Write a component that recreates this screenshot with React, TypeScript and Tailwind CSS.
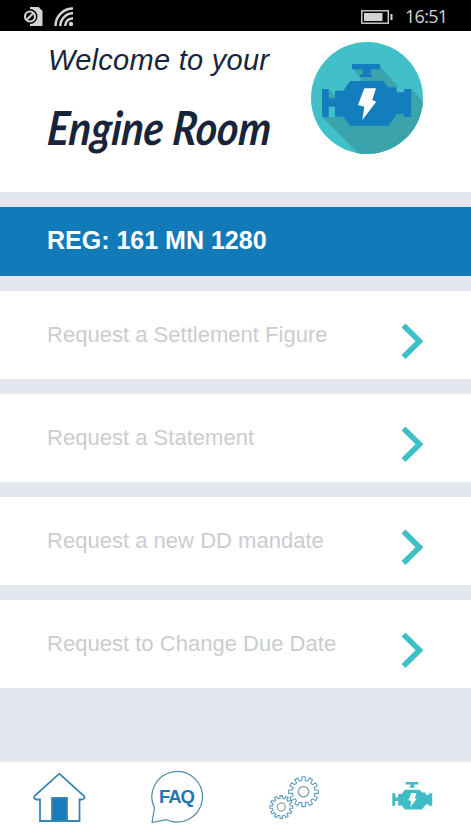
import React from 'react';

const requests = [
    'Request a Settlement Figure',
    'Request a Statement',
    'Request a new DD mandate',
    'Request to Change Due Date',
];

const ENGINE_BODY =
    'M39 39H72.3L77.3 45.3H85.7V50.3H93V47H100.3V75H93V72H86L77.3 83.7H39L32.3 74.7H24V64.7H17.7V75H11V47H17.7V56.3H24V48.7H32.3Z';
const ENGINE_CAP = 'M41 22H69V27.3H59.7V32.7H61V35H49V32.7H51.7V27.3H41Z';
const BOLT = 'M53.3 46.3H65L61.3 58L65.3 59.7L51.3 78L53.3 64.7L47 63Z';

const gearPath = (cx: number, cy: number, outer: number, inner: number, teeth: number) => {
    const step = (Math.PI * 2) / teeth;
    const points: string[] = [];
    for (let i = 0; i < teeth; i++) {
        [[-0.28, inner], [-0.22, outer], [0.22, outer], [0.28, inner]].forEach(([offset, r]) => {
            const a = (i + offset) * step;
            points.push(`${(cx + Math.cos(a) * r).toFixed(2)} ${(cy + Math.sin(a) * r).toFixed(2)}`);
        });
    }
    return `M${points.join('L')}Z`;
};

const StatusBar: React.FC = () => (
    <header className="flex h-[31px] shrink-0 items-center bg-black pl-[23px] pr-[23px] pt-[2px] text-[#d4d4d4]">
        <svg className="h-[20px] w-[20px]" viewBox="0 0 20 20">
            <path d="M7 0H15.5L19.5 4V19H7Z" fill="currentColor" />
            <circle cx="7" cy="9.5" r="7.4" fill="#000" />
            <path d="M0 0H7V3H0ZM0 16H7V20H0Z" fill="#000" />
            <circle cx="7" cy="9.5" r="5" fill="none" stroke="currentColor" strokeWidth="2.2" />
            <path d="M4 12.5L10 6.5" stroke="currentColor" strokeWidth="2.2" />
        </svg>
        <svg className="ml-[11px] h-[20px] w-[20px]" viewBox="0 0 20 20" fill="none" stroke="currentColor" strokeWidth="2.5">
            <path d="M1.5 19A17.5 17.5 0 0 1 19 1.5M6.3 19A12.7 12.7 0 0 1 19 6.3M11.2 19A7.8 7.8 0 0 1 19 11.2" />
            <circle cx="17" cy="17" r="2.2" fill="currentColor" stroke="none" />
        </svg>
        <svg className="ml-auto h-[14px] w-[32px]" viewBox="0 0 32 14">
            <rect x="0.8" y="0.8" width="26.5" height="12.4" fill="none" stroke="currentColor" strokeWidth="1.4" />
            <rect x="3" y="3" width="18.5" height="8" fill="currentColor" />
            <rect x="29.5" y="4" width="2" height="6" fill="currentColor" />
        </svg>
        <span className="ml-[12px] w-[43px] whitespace-nowrap font-['Open_Sans',sans-serif] text-[18px] leading-[31px] tracking-[-0.7px]">16:51</span>
    </header>
);

const EngineBadge: React.FC = () => (
    <svg className="mt-[11px] h-[112px] w-[112px]" viewBox="0 0 112 112">
        <clipPath id="badge">
            <circle cx="56" cy="56" r="56" />
        </clipPath>
        <g clipPath="url(#badge)">
            <rect width="112" height="112" fill="#41c0c9" />
            <path d="M11 75H32L82 62L100.3 47L112 60V112H48Z" fill="#3ba3ab" />
            <path d="M42 27L51 39V45H87L69 24Z" fill="#3ba3ab" />
            <path d="M17.7 47L24 54V56.3H17.7Z" fill="#3ba3ab" />
        </g>
        <path d={ENGINE_CAP} fill="#147dbd" />
        <path d={ENGINE_BODY} fill="#147dbd" />
        <path d={BOLT} fill="#fff" />
    </svg>
);

const RequestRow: React.FC<{ label: string }> = ({ label }) => (
    <button className="flex h-[88px] w-full shrink-0 items-start justify-between bg-white pl-[47px] pr-[46px] text-left">
        <span className="mt-[29px] whitespace-nowrap text-[22px] leading-[30px] tracking-[0.02px] text-[#cbccd0]">{label}</span>
        <svg className="mt-[31px] h-[38px] w-[25px]" viewBox="0 0 25 38" fill="none" stroke="#3dbfc6" strokeWidth="5.6">
            <path d="M3.5 3.5L19.5 19.3L3.5 35" />
        </svg>
    </button>
);

const NavBar: React.FC = () => (
    <nav className="grid h-[75px] shrink-0 grid-cols-4 justify-items-center bg-white pt-[8px]">
        <svg className="h-[60px] w-[60px]" viewBox="0 0 60 60" fill="none" stroke="#3986b3" strokeWidth="1.8">
            <path d="M23 51H11V29.5H8Q4 29 5.5 26L30.3 3.7L55 26Q56.5 29 53 29.5H50.5V51H38" />
            <path d="M23 28H38V51H23Z" fill="#147dbd" />
        </svg>
        <svg className="h-[60px] w-[60px]" viewBox="0 0 60 60">
            <path d="M5 52.5L7.5 38A25.3 25.3 0 1 1 19.5 49.7Z" fill="#fff" stroke="#4f8c9f" strokeWidth="1.2" strokeLinejoin="round" />
            <text x="30" y="33.3" textAnchor="middle" fill="#1d78b2" fontSize="18.5" fontWeight="700" textLength="36" className="font-['Liberation_Sans',Arial,sans-serif]">FAQ</text>
        </svg>
        <svg className="h-[60px] w-[60px]" viewBox="0 0 60 60" fill="none" stroke="#5f9dbe" strokeWidth="1.1" strokeLinejoin="round">
            <path d={gearPath(39.6, 21.7, 15, 11.3, 12)} />
            <circle cx="39.6" cy="21.7" r="5.2" stroke="#91a8b2" strokeWidth="1.5" />
            <path d={gearPath(17.3, 37, 11.5, 8.8, 12)} />
            <circle cx="17.3" cy="37" r="4" stroke="#91a8b2" strokeWidth="1.3" />
        </svg>
        <svg className="h-[60px] w-[60px]" viewBox="0 0 60 60">
            <g transform="translate(5.4 2.2) scale(0.447)">
                <path d={ENGINE_CAP} fill="#3fbdc6" />
                <path d={ENGINE_BODY} fill="#3fbdc6" />
                <path d={BOLT} fill="#fff" />
            </g>
        </svg>
    </nav>
);

const App: React.FC = () => {
    return (
        <main className="flex h-[837px] w-[471px] flex-col overflow-hidden bg-[#e4e8ee] font-['Liberation_Sans',Arial,sans-serif]">
            <StatusBar />
            <section className="flex h-[161px] shrink-0 justify-between bg-white pl-[48px] pr-[48px] text-[#17243c]">
                <div>
                    <p className="mt-[12px] whitespace-nowrap text-[29px] italic leading-[34px] tracking-[0.28px]">Welcome to your</p>
                    <h1 className="mt-[22px] w-[223px] origin-left -skew-x-6 scale-x-[0.87] whitespace-nowrap font-['Lato',sans-serif] text-[47px] font-bold italic leading-[56px]">
                        Engine Room
                    </h1>
                </div>
                <EngineBadge />
            </section>

            <section className="my-[15px] flex h-[69px] shrink-0 items-center bg-[#117ab9] pb-[3px] pl-[47px]">
                <h2 className="whitespace-nowrap text-[25px] font-bold leading-[30px] text-white">REG: 161 MN 1280</h2>
            </section>

            <div className="flex flex-1 flex-col gap-[15px]">
                {requests.map((label) => (
                    <RequestRow key={label} label={label} />
                ))}
            </div>

            <NavBar />
        </main>
    );
};

export default App;
